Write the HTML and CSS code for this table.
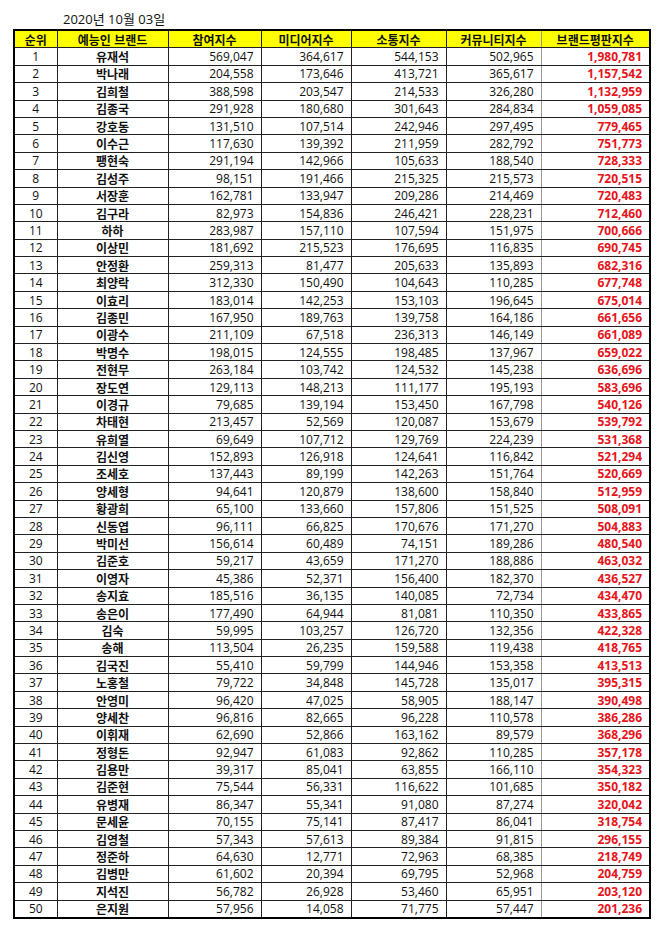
FILE: index.html
```html
<!DOCTYPE html>
<html lang="ko">
<head>
<meta charset="utf-8">
<title>예능인 브랜드평판</title>
<link rel="stylesheet" href="styles.css">
</head>
<body>
<div class="date">2020년 10월 03일</div>
<table class="rank">
<colgroup>
<col class="c-rank"><col class="c-name"><col class="c-a"><col class="c-b"><col class="c-c"><col class="c-d"><col class="c-e">
</colgroup>
<thead>
<tr><th>순위</th><th>예능인 브랜드</th><th>참여지수</th><th>미디어지수</th><th>소통지수</th><th>커뮤니티지수</th><th>브랜드평판지수</th></tr>
</thead>
<tbody>
<tr><td>1</td><td class="nm">유재석</td><td>569,047</td><td>364,617</td><td>544,153</td><td>502,965</td><td class="tot">1,980,781</td></tr>
<tr><td>2</td><td class="nm">박나래</td><td>204,558</td><td>173,646</td><td>413,721</td><td>365,617</td><td class="tot">1,157,542</td></tr>
<tr><td>3</td><td class="nm">김희철</td><td>388,598</td><td>203,547</td><td>214,533</td><td>326,280</td><td class="tot">1,132,959</td></tr>
<tr><td>4</td><td class="nm">김종국</td><td>291,928</td><td>180,680</td><td>301,643</td><td>284,834</td><td class="tot">1,059,085</td></tr>
<tr><td>5</td><td class="nm">강호동</td><td>131,510</td><td>107,514</td><td>242,946</td><td>297,495</td><td class="tot">779,465</td></tr>
<tr><td>6</td><td class="nm">이수근</td><td>117,630</td><td>139,392</td><td>211,959</td><td>282,792</td><td class="tot">751,773</td></tr>
<tr><td>7</td><td class="nm">팽현숙</td><td>291,194</td><td>142,966</td><td>105,633</td><td>188,540</td><td class="tot">728,333</td></tr>
<tr><td>8</td><td class="nm">김성주</td><td>98,151</td><td>191,466</td><td>215,325</td><td>215,573</td><td class="tot">720,515</td></tr>
<tr><td>9</td><td class="nm">서장훈</td><td>162,781</td><td>133,947</td><td>209,286</td><td>214,469</td><td class="tot">720,483</td></tr>
<tr><td>10</td><td class="nm">김구라</td><td>82,973</td><td>154,836</td><td>246,421</td><td>228,231</td><td class="tot">712,460</td></tr>
<tr><td>11</td><td class="nm">하하</td><td>283,987</td><td>157,110</td><td>107,594</td><td>151,975</td><td class="tot">700,666</td></tr>
<tr><td>12</td><td class="nm">이상민</td><td>181,692</td><td>215,523</td><td>176,695</td><td>116,835</td><td class="tot">690,745</td></tr>
<tr><td>13</td><td class="nm">안정환</td><td>259,313</td><td>81,477</td><td>205,633</td><td>135,893</td><td class="tot">682,316</td></tr>
<tr><td>14</td><td class="nm">최양락</td><td>312,330</td><td>150,490</td><td>104,643</td><td>110,285</td><td class="tot">677,748</td></tr>
<tr><td>15</td><td class="nm">이효리</td><td>183,014</td><td>142,253</td><td>153,103</td><td>196,645</td><td class="tot">675,014</td></tr>
<tr><td>16</td><td class="nm">김종민</td><td>167,950</td><td>189,763</td><td>139,758</td><td>164,186</td><td class="tot">661,656</td></tr>
<tr><td>17</td><td class="nm">이광수</td><td>211,109</td><td>67,518</td><td>236,313</td><td>146,149</td><td class="tot">661,089</td></tr>
<tr><td>18</td><td class="nm">박명수</td><td>198,015</td><td>124,555</td><td>198,485</td><td>137,967</td><td class="tot">659,022</td></tr>
<tr><td>19</td><td class="nm">전현무</td><td>263,184</td><td>103,742</td><td>124,532</td><td>145,238</td><td class="tot">636,696</td></tr>
<tr><td>20</td><td class="nm">장도연</td><td>129,113</td><td>148,213</td><td>111,177</td><td>195,193</td><td class="tot">583,696</td></tr>
<tr><td>21</td><td class="nm">이경규</td><td>79,685</td><td>139,194</td><td>153,450</td><td>167,798</td><td class="tot">540,126</td></tr>
<tr><td>22</td><td class="nm">차태현</td><td>213,457</td><td>52,569</td><td>120,087</td><td>153,679</td><td class="tot">539,792</td></tr>
<tr><td>23</td><td class="nm">유희열</td><td>69,649</td><td>107,712</td><td>129,769</td><td>224,239</td><td class="tot">531,368</td></tr>
<tr><td>24</td><td class="nm">김신영</td><td>152,893</td><td>126,918</td><td>124,641</td><td>116,842</td><td class="tot">521,294</td></tr>
<tr><td>25</td><td class="nm">조세호</td><td>137,443</td><td>89,199</td><td>142,263</td><td>151,764</td><td class="tot">520,669</td></tr>
<tr><td>26</td><td class="nm">양세형</td><td>94,641</td><td>120,879</td><td>138,600</td><td>158,840</td><td class="tot">512,959</td></tr>
<tr><td>27</td><td class="nm">황광희</td><td>65,100</td><td>133,660</td><td>157,806</td><td>151,525</td><td class="tot">508,091</td></tr>
<tr><td>28</td><td class="nm">신동엽</td><td>96,111</td><td>66,825</td><td>170,676</td><td>171,270</td><td class="tot">504,883</td></tr>
<tr><td>29</td><td class="nm">박미선</td><td>156,614</td><td>60,489</td><td>74,151</td><td>189,286</td><td class="tot">480,540</td></tr>
<tr><td>30</td><td class="nm">김준호</td><td>59,217</td><td>43,659</td><td>171,270</td><td>188,886</td><td class="tot">463,032</td></tr>
<tr><td>31</td><td class="nm">이영자</td><td>45,386</td><td>52,371</td><td>156,400</td><td>182,370</td><td class="tot">436,527</td></tr>
<tr><td>32</td><td class="nm">송지효</td><td>185,516</td><td>36,135</td><td>140,085</td><td>72,734</td><td class="tot">434,470</td></tr>
<tr><td>33</td><td class="nm">송은이</td><td>177,490</td><td>64,944</td><td>81,081</td><td>110,350</td><td class="tot">433,865</td></tr>
<tr><td>34</td><td class="nm">김숙</td><td>59,995</td><td>103,257</td><td>126,720</td><td>132,356</td><td class="tot">422,328</td></tr>
<tr><td>35</td><td class="nm">송해</td><td>113,504</td><td>26,235</td><td>159,588</td><td>119,438</td><td class="tot">418,765</td></tr>
<tr><td>36</td><td class="nm">김국진</td><td>55,410</td><td>59,799</td><td>144,946</td><td>153,358</td><td class="tot">413,513</td></tr>
<tr><td>37</td><td class="nm">노홍철</td><td>79,722</td><td>34,848</td><td>145,728</td><td>135,017</td><td class="tot">395,315</td></tr>
<tr><td>38</td><td class="nm">안영미</td><td>96,420</td><td>47,025</td><td>58,905</td><td>188,147</td><td class="tot">390,498</td></tr>
<tr><td>39</td><td class="nm">양세찬</td><td>96,816</td><td>82,665</td><td>96,228</td><td>110,578</td><td class="tot">386,286</td></tr>
<tr><td>40</td><td class="nm">이휘재</td><td>62,690</td><td>52,866</td><td>163,162</td><td>89,579</td><td class="tot">368,296</td></tr>
<tr><td>41</td><td class="nm">정형돈</td><td>92,947</td><td>61,083</td><td>92,862</td><td>110,285</td><td class="tot">357,178</td></tr>
<tr><td>42</td><td class="nm">김용만</td><td>39,317</td><td>85,041</td><td>63,855</td><td>166,110</td><td class="tot">354,323</td></tr>
<tr><td>43</td><td class="nm">김준현</td><td>75,544</td><td>56,331</td><td>116,622</td><td>101,685</td><td class="tot">350,182</td></tr>
<tr><td>44</td><td class="nm">유병재</td><td>86,347</td><td>55,341</td><td>91,080</td><td>87,274</td><td class="tot">320,042</td></tr>
<tr><td>45</td><td class="nm">문세윤</td><td>70,155</td><td>75,141</td><td>87,417</td><td>86,041</td><td class="tot">318,754</td></tr>
<tr><td>46</td><td class="nm">김영철</td><td>57,343</td><td>57,613</td><td>89,384</td><td>91,815</td><td class="tot">296,155</td></tr>
<tr><td>47</td><td class="nm">정준하</td><td>64,630</td><td>12,771</td><td>72,963</td><td>68,385</td><td class="tot">218,749</td></tr>
<tr><td>48</td><td class="nm">김병만</td><td>61,602</td><td>20,394</td><td>69,795</td><td>52,968</td><td class="tot">204,759</td></tr>
<tr><td>49</td><td class="nm">지석진</td><td>56,782</td><td>26,928</td><td>53,460</td><td>65,951</td><td class="tot">203,120</td></tr>
<tr><td>50</td><td class="nm">은지원</td><td>57,956</td><td>14,058</td><td>71,775</td><td>57,447</td><td class="tot">201,236</td></tr>
</tbody>
</table>
</body>
</html>
```
FILE: styles.css
```css
html, body {
  margin: 0;
  padding: 0;
  background: #ffffff;
}

body {
  font-family: "Open Sans", "Noto Sans CJK KR", sans-serif;
  color: #111111;
}

.date {
  padding: 11px 0 0 63px;
  height: 16px;
  line-height: 16px;
  font-size: 13px;
  margin-bottom: 2px;
  font-family: "Open Sans", "Noto Sans CJK KR", sans-serif;
}

.rank {
  margin-left: 13px;
  width: 636px;
  table-layout: fixed;
  border-collapse: collapse;
  border: 2px solid #000000;
  font-size: 12px;
}

.c-rank { width: 43px; }
.c-name { width: 111px; }
.c-a { width: 93px; }
.c-b { width: 90px; }
.c-c { width: 95px; }
.c-d { width: 95px; }
.c-e { width: 109px; }

.rank th,
.rank td {
  border: 1px solid #222222;
  height: 16.4px;
  padding: 0 7px 0 0;
  line-height: 15px;
  white-space: nowrap;
  overflow: hidden;
  text-align: right;
}

.rank th {
  background: #ffff00;
  font-family: "Noto Sans CJK KR", sans-serif;
  font-weight: 700;
  text-align: center;
  padding: 0;
}

.rank td:first-child {
  text-align: center;
  padding: 0;
}

.rank td.nm {
  font-family: "Noto Sans CJK KR", sans-serif;
  font-weight: 700;
  text-align: center;
  padding: 0;
}

.rank td:nth-child(6),
.rank th:nth-child(6) {
  border-right-color: #9a9a9a;
}

.rank td.tot {
  color: #e8141b;
  font-weight: 700;
}
```
